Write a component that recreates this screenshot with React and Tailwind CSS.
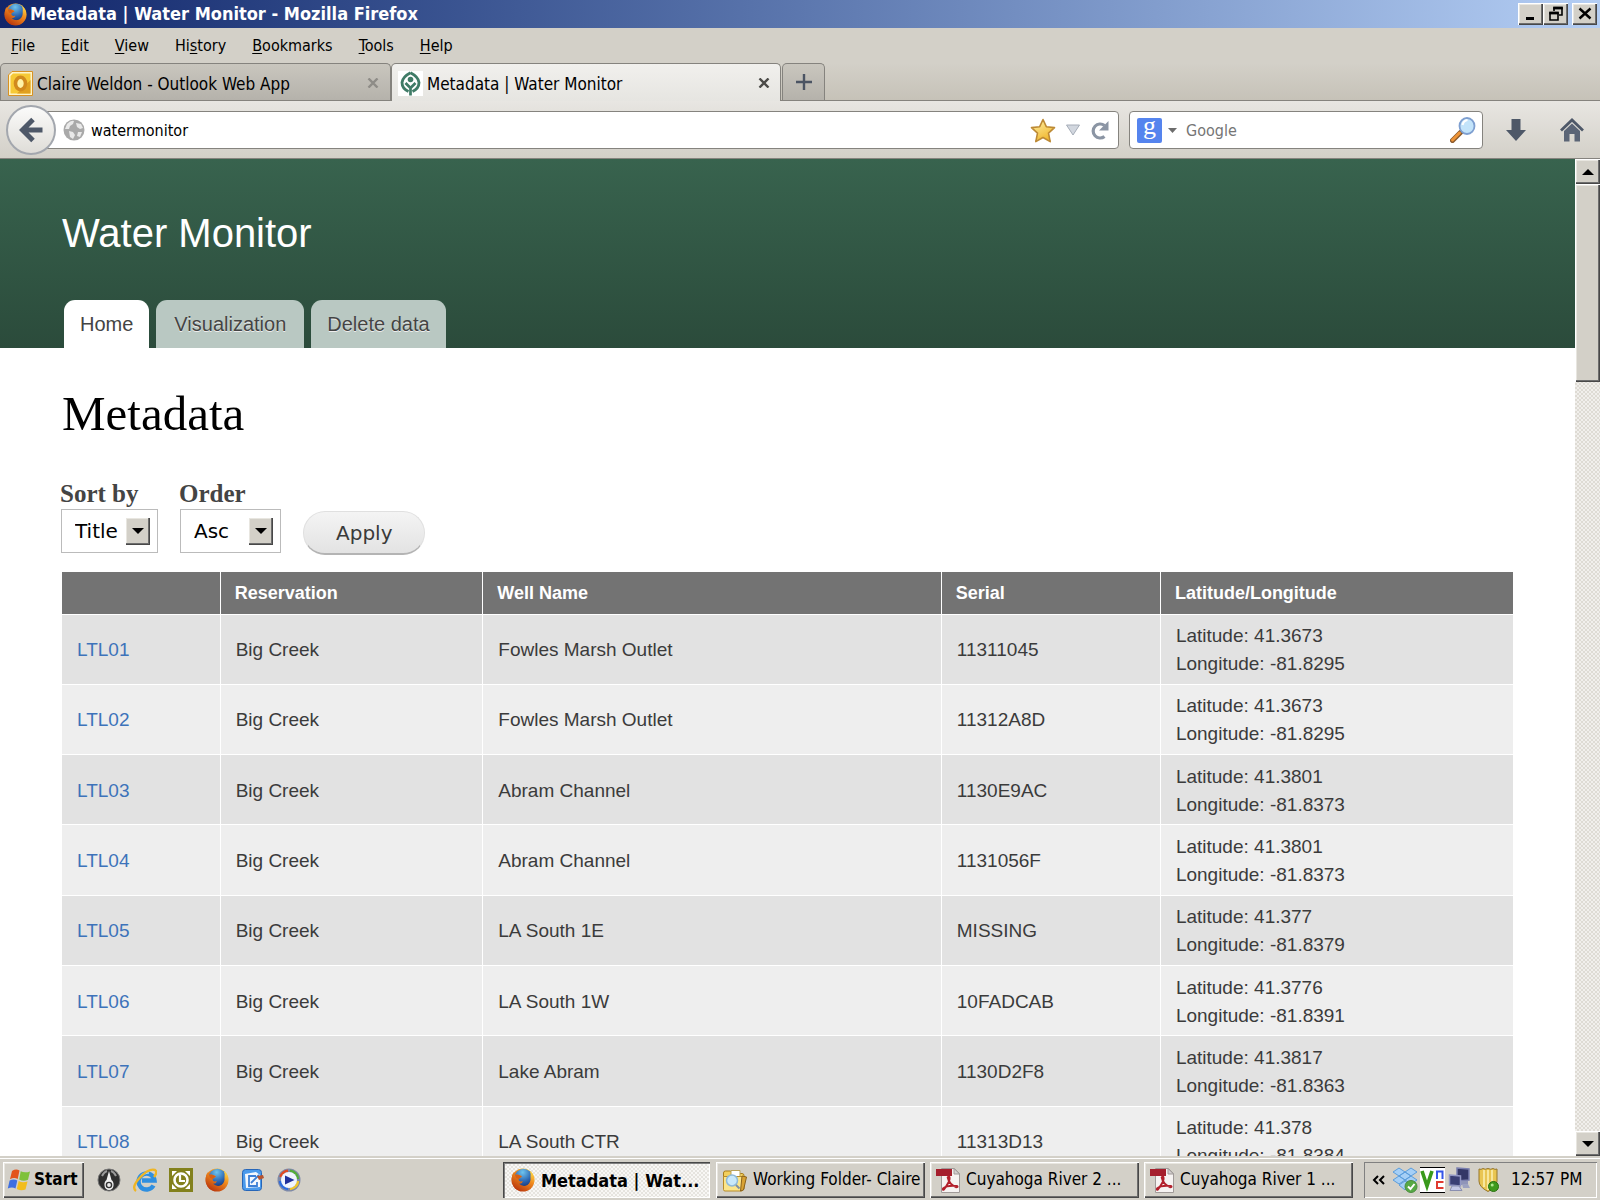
import React from "react";

const rows = [
  ["LTL01", "Fowles Marsh Outlet", "11311045", "41.3673", "-81.8295"],
  ["LTL02", "Fowles Marsh Outlet", "11312A8D", "41.3673", "-81.8295"],
  ["LTL03", "Abram Channel", "1130E9AC", "41.3801", "-81.8373"],
  ["LTL04", "Abram Channel", "1131056F", "41.3801", "-81.8373"],
  ["LTL05", "LA South 1E", "MISSING", "41.377", "-81.8379"],
  ["LTL06", "LA South 1W", "10FADCAB", "41.3776", "-81.8391"],
  ["LTL07", "Lake Abram", "1130D2F8", "41.3817", "-81.8363"],
  ["LTL08", "LA South CTR", "11313D13", "41.378", "-81.8384"],
];

const raised =
  "bg-[#d3d0c8] shadow-[inset_1px_1px_0_#fff,inset_-1px_-1px_0_#484848,inset_-2px_-2px_0_#6e6e6e,inset_2px_2px_0_#e8e6e0]";

function Firefox({ className }) {
  return (
    <svg viewBox="0 0 24 24" className={className} aria-hidden="true">
      <defs>
        <linearGradient id="ffBody" x1="0.9" y1="0" x2="0.2" y2="1">
          <stop offset="0" stopColor="#ffe04a" />
          <stop offset="0.4" stopColor="#f08a1d" />
          <stop offset="1" stopColor="#b5300c" />
        </linearGradient>
        <radialGradient id="ffGlobe" cx="0.45" cy="0.2" r="0.9">
          <stop offset="0" stopColor="#6fc4ee" />
          <stop offset="0.6" stopColor="#2a64b0" />
          <stop offset="1" stopColor="#17306e" />
        </radialGradient>
      </defs>
      <circle cx="12" cy="12" r="11.5" fill="url(#ffBody)" />
      <circle cx="12.5" cy="9.5" r="8.7" fill="url(#ffGlobe)" />
      <path d="M19 3q5 5 4 11q-2 8-10 9Q4 23.500 1 15Q0 9 2.500 4q0 2 1.500 3q2-1 4 0q2 0 3 1.500q-2 1-3.500 2.500q0 2 2 2.500l2.500-.2q-1 2.700-4 2.500q4 3.500 8.500 1.200Q20 14 19.500 9.500Q20 6 19 3Z" fill="url(#ffBody)" />
      <path d="M4 7q2-1 4 0l3 1.500q-2 1-3.500 2.500L5 10Z" fill="#d75f14" />
    </svg>
  );
}

function OutlookIcon() {
  return (
    <svg viewBox="0 0 25 25" className="size-[25px] shrink-0" aria-hidden="true">
      <path d="M4 .5h20.500v24H.5V4Z" fill="#fff4c8" stroke="#d89222" />
      <path d="M5 2.500h17.500v20H2.500V5Z" fill="#f6c936" />
      <path d="M22.500 9v13.500H9Z" fill="#e0a020" />
      <ellipse cx="12.500" cy="12.500" rx="5" ry="6.200" fill="#fff3a8" stroke="#d18a1d" strokeWidth="3.600" />
    </svg>
  );
}

function LeafIcon() {
  return (
    <svg viewBox="0 0 25 25" className="size-[25px] shrink-0 bg-white" aria-hidden="true">
      <path d="M12.500 1.800Q20.500 6 21 11.500Q21 17.500 14.500 20.500M12.500 1.800Q4.500 6 4 11.500Q4 17.500 10.500 20.500" fill="none" stroke="#3f7b66" strokeWidth="2.800" />
      <circle cx="12.500" cy="8.500" r="2.800" fill="#3f7b66" />
      <path d="M12.500 24.500V15M12.500 17L7.500 12M12.500 17l5-5" fill="none" stroke="#3f7b66" strokeWidth="2.700" />
    </svg>
  );
}

function Cross({ color }) {
  return (
    <svg viewBox="0 0 12 10" className="h-[10px] w-[12px]" aria-hidden="true">
      <path d="M1.500 0.500l9 9M10.500 0.500l-9 9" stroke={color} strokeWidth="2.400" />
    </svg>
  );
}

function PdfIcon() {
  return (
    <svg viewBox="0 0 25 26" className="h-[26px] w-[25px] shrink-0" aria-hidden="true">
      <path d="M5.500 1.500h13l5 5v19h-18Z" fill="#f6f3f2" stroke="#a09a98" />
      <path d="M18 1.500v5.500h5.500Z" fill="#d4d0d0" stroke="#a09a98" />
      <rect x="0" y="2" width="16" height="7" fill="#a51f2d" />
      <path d="M12.500 9.500q1.500 0 1 3t-5.500 10q-1.500 1-1-1q4-3.500 14-2.500q1.500 1-1 1.200Q13 17 11.700 10.500Z" fill="none" stroke="#b3202c" strokeWidth="1.900" />
    </svg>
  );
}

function FolderIcon() {
  return (
    <svg viewBox="0 0 26 25" className="h-[25px] w-[26px] shrink-0" aria-hidden="true">
      <path d="M1.500 5q0-2 2-2h5l2.500 2.500h9q2 0 2 2V21h-20.500Z" fill="#f2cf5c" stroke="#a87c1a" />
      <path d="M9 2.500h9v8H9Z" fill="#fff" stroke="#b9a25a" />
      <path d="M1.500 8.500h19V22q0 1-1.500 1H3q-1.500 0-1.500-1.500Z" fill="#fbe58b" stroke="#b88c28" />
      <path d="M20 8l4.500 1-3 13-3 1Z" fill="#d9a233" stroke="#8a621a" />
      <circle cx="10" cy="12.500" r="5.500" fill="#c8e8fa" stroke="#8fb9d8" strokeWidth="1.500" />
      <path d="M14 17l3.500 3.500" stroke="#7f8fa0" strokeWidth="2" />
    </svg>
  );
}

function WindowsFlag() {
  return (
    <svg viewBox="0 0 24 22" className="h-[22px] w-[24px] shrink-0" aria-hidden="true">
      <path d="M5 2q4-2.500 7.500-.5L10.700 10Q7 8 3 10.200Z" fill="#e3541c" />
      <path d="M13.700 2.300q4 2 9.300.2l-2 8.300q-4.500 2-8.800-.3Z" fill="#7fc13a" />
      <path d="M2.600 11.500q4-2 7.700 0L8.500 19.500Q5 17.500.8 19.500Z" fill="#3e6fe0" />
      <path d="M11.700 12q4 2.200 8.800.4l-2 8q-4.500 1.800-8.700-.5Z" fill="#f2bd1d" />
    </svg>
  );
}

function TriUp() {
  return (
    <svg viewBox="0 0 12 6" className="h-[6px] w-[12px]" aria-hidden="true">
      <path d="M6 0l6 6H0Z" fill="#000" />
    </svg>
  );
}

function TriDown() {
  return (
    <svg viewBox="0 0 12 6" className="h-[6px] w-[12px]" aria-hidden="true">
      <path d="M0 0h12L6 6Z" fill="#000" />
    </svg>
  );
}

function TitleBar() {
  return (
    <header className="flex h-7 shrink-0 items-center bg-linear-to-r from-[#12256a] to-[#b4cef4] pr-[3px] pl-1">
      <Firefox className="size-[23px]" />
      <h1 className="ml-[3px] flex-1 text-[18px] leading-7 font-bold text-white">
        Metadata | Water Monitor - Mozilla Firefox
      </h1>
      <button aria-label="Minimize" className={`grid h-[22px] w-[25px] place-items-center ${raised}`}>
        <svg viewBox="0 0 16 16" className="size-4" aria-hidden="true">
          <path d="M3 12.500h8" stroke="#000" strokeWidth="3" />
        </svg>
      </button>
      <button aria-label="Restore" className={`grid h-[22px] w-[25px] place-items-center ${raised}`}>
        <svg viewBox="0 0 16 16" className="size-4" aria-hidden="true">
          <path d="M6 5V2h8v7h-3" fill="none" stroke="#000" strokeWidth="1.600" />
          <path d="M5.200 2h9.600" stroke="#000" strokeWidth="2.800" />
          <path d="M2 7h8v7H2Z" fill="none" stroke="#000" strokeWidth="1.600" />
          <path d="M1.200 7h9.600" stroke="#000" strokeWidth="2.800" />
        </svg>
      </button>
      <button aria-label="Close" className={`ml-1 grid h-[22px] w-[25px] place-items-center ${raised}`}>
        <svg viewBox="0 0 16 16" className="size-4" aria-hidden="true">
          <path d="M2.500 2.500l11 10M13.500 2.500l-11 10" stroke="#000" strokeWidth="2.400" />
        </svg>
      </button>
    </header>
  );
}

const menus = [
  ["", "F", "ile"],
  ["", "E", "dit"],
  ["", "V", "iew"],
  ["Hi", "s", "tory"],
  ["", "B", "ookmarks"],
  ["", "T", "ools"],
  ["", "H", "elp"],
];

function MenuBar() {
  return (
    <nav aria-label="Menu" className="flex h-[35px] shrink-0 items-center gap-[26px] bg-[#d3d0c8] pl-[11px]">
      {menus.map(([a, b, c]) => (
        <button key={b + c} className="text-[16px] leading-6">
          {a}
          <span className="underline underline-offset-2">{b}</span>
          {c}
        </button>
      ))}
    </nav>
  );
}

function TabStrip() {
  return (
    <div className="flex h-[38px] shrink-0 border-b border-[#85837e] bg-linear-to-b from-[#d3d0c8] to-[#c6c2b8]">
      <div className="flex w-[391px] items-center rounded-t-[5px] border border-b-0 border-[#85837e] bg-linear-to-b from-[#c9c6be] to-[#b5b2ab] pt-[2px] pr-[11px] pl-[7px]">
        <OutlookIcon />
        <button className="ml-1 flex-1 truncate pt-[2px] text-left text-[17px] leading-6">Claire Weldon - Outlook Web App</button>
        <button aria-label="Close Claire Weldon tab"><Cross color="#8e8c87" /></button>
      </div>
      <div className="-mb-px flex w-[390px] items-center rounded-t-[5px] border border-b-0 border-[#85837e] bg-linear-to-b from-[#f1f0ed] to-[#e6e5e1] pt-px pr-[10px] pl-[6px]">
        <LeafIcon />
        <button className="ml-1 flex-1 truncate pt-[2px] text-left text-[17px] leading-6">Metadata | Water Monitor</button>
        <button aria-label="Close Metadata tab"><Cross color="#4c4b48" /></button>
      </div>
      <button aria-label="New tab" className="ml-px grid w-[43px] place-items-center rounded-t-[5px] border border-b-0 border-[#85837e] bg-linear-to-b from-[#c9c6be] to-[#b5b2ab]">
        <svg viewBox="0 0 16 16" className="size-4" aria-hidden="true">
          <path d="M8 0v16M0 8h16" stroke="#4b5463" strokeWidth="2.400" />
        </svg>
      </button>
    </div>
  );
}

function NavBar() {
  return (
    <div className="flex h-[58px] shrink-0 items-center border-b border-[#85837e] bg-linear-to-b from-[#e8e6e2] to-[#d3d0c8] pt-px pr-4 pl-[6px]">
      <button aria-label="Back" className="relative z-10 grid size-[50px] shrink-0 place-items-center rounded-full border-2 border-[#a3a7ae] bg-linear-to-b from-[#fbfbfa] to-[#dfddd8]">
        <svg viewBox="0 0 24 26" className="h-[26px] w-6" aria-hidden="true">
          <path d="M14 2.500L3.500 13L14 23.500M4 13h19.500" fill="none" stroke="#4e5868" strokeWidth="5" />
        </svg>
      </button>
      <div className="-ml-4 flex h-[38px] flex-1 items-center rounded-r-[4px] border border-[#85837e] bg-white pr-[9px] pl-[22px]">
        <svg viewBox="0 0 22 22" className="size-[22px] shrink-0" aria-hidden="true">
          <circle cx="11" cy="11" r="10.500" fill="#a9a9a9" />
          <path d="M4 5q4-4 7-3l-1 3-3 2-1 3-4 0ZM13 4l5 1 2 4-3 1-3-2ZM6 12l4 1 2 3-2 4-3-2ZM15 13l4 0-2 5-3-1Z" fill="#e9e9e9" />
        </svg>
        <input aria-label="Address" defaultValue="watermonitor" className="ml-[6px] min-w-0 flex-1 bg-transparent pt-[2px] text-[16px] leading-6 outline-none" />
        <button aria-label="Bookmark">
          <svg viewBox="0 0 26 25" className="h-[25px] w-[26px]" aria-hidden="true">
            <defs>
              <linearGradient id="star" x1="0" y1="0" x2="0.5" y2="1">
                <stop offset="0" stopColor="#fff2ac" />
                <stop offset="1" stopColor="#f0b830" />
              </linearGradient>
            </defs>
            <path d="M13 1.500l3.300 7.200 8.200.9-6 5.500 1.700 8.500L13 19.500l-7.200 4.100 1.700-8.500-6-5.500 8.200-.9Z" fill="url(#star)" stroke="#bd8a35" strokeWidth="1.600" strokeLinejoin="round" />
          </svg>
        </button>
        <button aria-label="History" className="ml-[9px]">
          <svg viewBox="0 0 16 12" className="h-3 w-4" aria-hidden="true">
            <path d="M1.500 1h13L8 11Z" fill="#d2d7df" stroke="#a6adb8" />
          </svg>
        </button>
        <button aria-label="Reload" className="ml-[9px]">
          <svg viewBox="0 0 19 20" className="h-5 w-[19px]" aria-hidden="true">
            <path d="M14.500 16.500A7 7 0 1 1 14.500 5.500" fill="none" stroke="#8b95a4" strokeWidth="3.200" />
            <path d="M18.500 1v9.500H9Z" fill="#8b95a4" />
          </svg>
        </button>
      </div>
      <div className="ml-[10px] flex h-[38px] w-[354px] items-center rounded-[4px] border border-[#85837e] bg-white pr-[6px] pl-[7px]">
        <div className="grid h-[25px] w-[25px] shrink-0 place-items-center rounded-[2px] bg-[#5584ee] font-['Liberation_Serif',serif] text-[26px] leading-[20px] text-white">
          <span className="-mt-2">g</span>
        </div>
        <button aria-label="Choose search engine" className="ml-[6px]">
          <svg viewBox="0 0 9 5" className="h-[5px] w-[9px]" aria-hidden="true">
            <path d="M0 0h9L4.500 5Z" fill="#6c6c6c" />
          </svg>
        </button>
        <input aria-label="Search" placeholder="Google" className="ml-[9px] min-w-0 flex-1 bg-transparent pt-[2px] text-[16px] leading-6 outline-none placeholder:text-[#757575]" />
        <button aria-label="Go">
          <svg viewBox="0 0 26 26" className="size-[26px]" aria-hidden="true">
            <path d="M2.500 23.500l8-8" stroke="#8a5a2c" strokeWidth="5" strokeLinecap="round" />
            <path d="M2.500 23l7-7" stroke="#ee9438" strokeWidth="3" strokeLinecap="round" />
            <ellipse cx="17" cy="9" rx="7.500" ry="8" fill="#c3e4fa" stroke="#7e9fd0" strokeWidth="1.800" />
            <path d="M12.500 8q1-4.500 5-5" fill="none" stroke="#fff" strokeWidth="2.200" />
          </svg>
        </button>
      </div>
      <button aria-label="Downloads" className="ml-[22px]">
        <svg viewBox="0 0 22 24" className="h-6 w-[22px]" aria-hidden="true">
          <path d="M6.500 1h9v11H21L11 23 1 12h5.500Z" fill="#4e5868" />
        </svg>
      </button>
      <button aria-label="Home" className="ml-[33px]">
        <svg viewBox="0 0 24 24" className="size-6" aria-hidden="true">
          <path d="M1 12.500L12 2l11 10.500" fill="none" stroke="#4e5868" strokeWidth="2.800" />
          <path d="M4 13l8-7.500L20 13v10.500h-5.500V16h-5v7.500H4Z" fill="#5b6576" />
        </svg>
      </button>
    </div>
  );
}

function SortSelect({ id, label, options, width }) {
  return (
    <div className="flex flex-col">
      <label htmlFor={id} className="-ml-px font-['Liberation_Serif',serif] text-[25px] leading-[30px] font-bold text-[#444]">
        {label}
      </label>
      <div className={`relative h-[44px] ${width}`}>
        <select id={id} className="size-full appearance-none rounded-none border border-[#bbb] bg-white pl-[13px] font-['DejaVu_Sans',sans-serif] text-[20px] text-black outline-none">
          {options.map((o) => (
            <option key={o}>{o}</option>
          ))}
        </select>
        <span className={`pointer-events-none absolute top-2 right-2 grid h-[28px] w-[25px] place-items-center ${raised}`}>
          <TriDown />
        </span>
      </div>
    </div>
  );
}

function WebPage() {
  return (
    <main className="min-w-0 flex-1 overflow-hidden bg-white font-['Liberation_Sans',sans-serif]">
      <div className="flex h-[189px] flex-col justify-between bg-linear-to-b from-[#38634e] to-[#2b4b3b] px-[62px]">
        <h2 className="mt-[50px] text-[40px] leading-[48px] text-white">Water Monitor</h2>
        <nav aria-label="Site" className="ml-[2px] flex gap-[7px] text-[20px] leading-[48px] text-[#444]">
          <a href="#home" className="rounded-t-[11px] bg-white px-4">Home</a>
          <a href="#visualization" className="rounded-t-[11px] bg-[#b9c8c2] px-[18px] text-shadow-[0_1px_0_#eee]">Visualization</a>
          <a href="#delete" className="rounded-t-[11px] bg-[#b9c8c2] px-4 text-shadow-[0_1px_0_#eee]">Delete data</a>
        </nav>
      </div>
      <div className="px-[62px]">
        <h2 className="pt-9 font-['Liberation_Serif',serif] text-[49px] leading-[60px] text-black">Metadata</h2>
        <form className="-ml-px mt-[35px] flex items-end">
          <SortSelect id="sort" label="Sort by" options={["Title"]} width="w-[97px]" />
          <div className="w-[22px]" />
          <SortSelect id="order" label="Order" options={["Asc", "Desc"]} width="w-[101px]" />
          <button type="button" className="-mb-[2px] ml-[22px] h-[44px] rounded-full border border-b-2 border-[#e0e0e0] border-b-[#b4b4b4] bg-linear-to-b from-[#f4f4f4] to-[#e3e3e3] px-8 font-['DejaVu_Sans',sans-serif] text-[20px] text-[#3a3a3a]">
            Apply
          </button>
        </form>
        <table className="mt-[19px] h-[605px] w-full table-fixed border-collapse text-left text-[19px] leading-7 text-[#3b3b3b]">
          <colgroup>
            <col className="w-[10.9%]" />
            <col className="w-[18.1%]" />
            <col className="w-[31.6%]" />
            <col className="w-[15.1%]" />
            <col />
          </colgroup>
          <thead>
            <tr className="h-[42px] border-b border-white bg-[#737373] text-[18px] text-white">
              {["", "Reservation", "Well Name", "Serial", "Latitude/Longitude"].map((h) => (
                <th key={h} scope="col" className="border-r border-white pl-[14px] font-bold last:border-r-0">{h}</th>
              ))}
            </tr>
          </thead>
          <tbody>
            {rows.map(([id, well, serial, lat, lng]) => (
              <tr key={id} className="h-[70px] border-b border-white odd:bg-[#e2e2e2] even:bg-[#eee]">
                <td className="border-r border-white pt-[2px] pl-[15px]">
                  <a href={"#" + id} className="text-[#3d73ba]">{id}</a>
                </td>
                <td className="border-r border-white pt-[2px] pl-[15px]">Big Creek</td>
                <td className="border-r border-white pt-[2px] pl-[15px]">{well}</td>
                <td className="border-r border-white pt-[2px] pl-[15px]">{serial}</td>
                <td className="pt-[2px] pl-[15px]">
                  Latitude: {lat}
                  <br />
                  Longitude: {lng}
                </td>
              </tr>
            ))}
          </tbody>
        </table>
      </div>
    </main>
  );
}

function ScrollBar() {
  return (
    <div className="flex w-[25px] shrink-0 flex-col bg-[#ebe9e5] bg-[repeating-conic-gradient(#f1efec_0_25%,#dedbd4_0_50%)] bg-size-[4px_4px]">
      <button aria-label="Scroll up" className={`grid h-[25px] place-items-center ${raised}`}><TriUp /></button>
      <div className={`h-[198px] ${raised}`} />
      <button aria-label="Scroll down" className={`mt-auto grid h-[25px] place-items-center ${raised}`}><TriDown /></button>
    </div>
  );
}

function QuickLaunch() {
  const c = "size-6";
  return (
    <div className="ml-[13px] flex items-center gap-3">
      <button aria-label="Pen tool">
        <svg viewBox="0 0 24 24" className={c} aria-hidden="true">
          <circle cx="12" cy="12" r="11" fill="#2e2e2e" stroke="#777" />
          <path d="M5 8q2-4 5-5M19 8q-2-4-5-5" stroke="#999" fill="none" strokeWidth="2" />
          <path d="M12 3l2.500 9q2.500 2 2 5.500a4.500 4.500 0 0 1-9 0q-.5-3.500 2-5.500Z" fill="#f0f0f0" />
          <circle cx="12" cy="17" r="2.600" fill="#eee" stroke="#333" strokeWidth="1.400" />
        </svg>
      </button>
      <button aria-label="Internet Explorer">
        <svg viewBox="0 0 24 24" className={c} aria-hidden="true">
          <path d="M20.500 17.500a8 8 0 1 1 1-5H9" fill="none" stroke="#2f8fe0" strokeWidth="4.400" />
          <path d="M8 8q3-3.500 8-3" fill="none" stroke="#a9dafa" strokeWidth="1.500" />
          <path d="M3 23Q-2 19 7 9.500T22 2q3 2-1 7" fill="none" stroke="#efb524" strokeWidth="2.400" />
        </svg>
      </button>
      <button aria-label="Clock">
        <svg viewBox="0 0 24 24" className={c} aria-hidden="true">
          <rect width="24" height="24" fill="#83811d" />
          <path d="M3 3h5L3 8ZM21 3h-5l5 5ZM3 21h5l-5-5ZM21 21h-5l5-5Z" fill="#fff" />
          <circle cx="12" cy="12" r="6.500" fill="#83811d" stroke="#fff" strokeWidth="2.600" />
          <path d="M11 7v6h5" stroke="#fff" strokeWidth="2.200" fill="none" />
        </svg>
      </button>
      <button aria-label="Firefox"><Firefox className={c} /></button>
      <button aria-label="Show desktop">
        <svg viewBox="0 0 24 24" className={c} aria-hidden="true">
          <rect x="1.500" y="1.500" width="19" height="21" rx="3" fill="#4a9aec" stroke="#2766b8" />
          <path d="M4 6l11-2 4 3v12l-14 1Z" fill="#f3f8fe" />
          <path d="M15 8H8v10h8v-4M10 15l8-8" stroke="#3c7fd6" strokeWidth="1.800" fill="none" />
          <path d="M16 8l6-1 1 3-5 2Z" fill="#b5532f" />
        </svg>
      </button>
      <button aria-label="Media player">
        <svg viewBox="0 0 24 24" className={c} aria-hidden="true">
          <circle cx="12" cy="12" r="11.500" fill="#7f8aa8" />
          <path d="M3.500 9A9 9 0 0 1 11 2.800" stroke="#e04a24" strokeWidth="2.600" fill="none" />
          <path d="M13 2.800A9 9 0 0 1 21 11" stroke="#54ad3a" strokeWidth="2.600" fill="none" />
          <path d="M21 13a9 9 0 0 1-8 8" stroke="#f1c62b" strokeWidth="2.600" fill="none" />
          <path d="M11 21a9 9 0 0 1-8-8" stroke="#2d6ce0" strokeWidth="2.600" fill="none" />
          <circle cx="12" cy="12" r="8" fill="#f1f5ff" />
          <path d="M8 7.500l9.500 4.500L8 16.500Z" fill="#22319c" />
        </svg>
      </button>
    </div>
  );
}

function Task({ icon, children }) {
  return (
    <button className={`flex h-9 w-[209px] shrink-0 items-center gap-[5px] pl-[6px] text-[17px] whitespace-nowrap ${raised}`}>
      {icon}
      {children}
    </button>
  );
}

function Tray() {
  return (
    <div className="flex h-9 w-[233px] shrink-0 items-center pl-2 shadow-[inset_1px_1px_0_#808080,inset_-1px_-1px_0_#fff]">
      <button aria-label="Show hidden icons">
        <svg viewBox="0 0 13 10" className="h-[10px] w-[13px]" aria-hidden="true">
          <path d="M6 1L2 5l4 4M12 1L8 5l4 4" stroke="#000" strokeWidth="2" fill="none" />
        </svg>
      </button>
      <svg viewBox="0 0 26 26" className="ml-[7px] size-[26px]" aria-hidden="true">
        <path d="M7 1l6 4-6 4-6-4ZM19 1l6 4-6 4-6-4ZM7 9l6 4-6 4-6-4ZM19 9l6 4-6 4-6-4ZM13 14l6 4-6 5-6-5ZM13 5l6 4-6 4-6-4Z" fill="#a5cff6" stroke="#5a9ddc" />
        <circle cx="19" cy="19.500" r="6" fill="#57a945" stroke="#4a8c3c" />
        <path d="M16 19.500l2.500 2.500 4-5" stroke="#fff" strokeWidth="2" fill="none" />
      </svg>
      <svg viewBox="0 0 25 26" className="ml-[2px] h-[26px] w-[25px]" aria-hidden="true">
        <rect width="25" height="26" fill="#fff" />
        <path d="M0 .5h25M0 25.500h25" stroke="#000" />
        <path d="M2 4l5 15 5-15" fill="none" stroke="#3a9a1c" strokeWidth="3.600" />
        <path d="M17 12V4.500h5.500V12" fill="none" stroke="#3455e8" strokeWidth="2" />
        <path d="M23.500 15H17v6h6.500" fill="none" stroke="#e03a30" strokeWidth="2" />
      </svg>
      <svg viewBox="0 0 24 26" className="ml-[3px] h-[26px] w-6" aria-hidden="true">
        <path d="M9 1l12 1v11l-12 1Z" fill="#333766" stroke="#7a7fae" strokeWidth="1.500" />
        <path d="M13 14h7v4h-7Z" fill="#8f94b8" />
        <path d="M1.500 8l11 1v10l-11-1Z" fill="#3a3f74" stroke="#9297c4" strokeWidth="1.500" />
        <path d="M4 19h7l3 4.500H2Z" fill="#c4c8e6" stroke="#8a8fb0" />
        <path d="M14 17h6l2 4h-7Z" fill="#9ca1c0" />
      </svg>
      <svg viewBox="0 0 24 26" className="ml-[5px] h-[26px] w-6" aria-hidden="true">
        <path d="M2 2q2 1 4-.5Q8 3 11 1.500 14 3 16 1.500 18 3 20 2v12q0 6-9 10.500Q2 20 2 14Z" fill="#e9c552" stroke="#96762a" />
        <path d="M7 3v17M11 3v20M15 3v17" stroke="#fbeeb0" strokeWidth="1.600" />
        <circle cx="16.500" cy="19.500" r="5" fill="#3f9a1d" stroke="#28700f" />
        <circle cx="15.200" cy="18" r="1.500" fill="#b0e890" />
      </svg>
      <time className="ml-[10px] text-[17px] whitespace-nowrap">12:57 PM</time>
    </div>
  );
}

function TaskBar() {
  return (
    <footer className="flex h-11 shrink-0 items-center border-t-2 border-[#d3d0c8] bg-[#d3d0c8] px-[3px] pt-[2px] shadow-[inset_0_1px_0_#fff]">
      <button className={`flex h-9 w-[81px] shrink-0 items-center gap-[3px] pl-1 text-[17px] font-bold ${raised}`}>
        <WindowsFlag />
        Start
      </button>
      <QuickLaunch />
      <div className="ml-auto flex gap-[5px]">
        <button className="mr-px flex h-9 w-[207px] items-center gap-[6px] bg-[#efedea] bg-[repeating-conic-gradient(#f8f7f5_0_25%,#e6e4df_0_50%)] bg-size-[4px_4px] pl-[8px] text-[18px] font-bold whitespace-nowrap shadow-[inset_1px_1px_0_#484848,inset_2px_2px_0_#808080,inset_-1px_-1px_0_#fff]">
          <Firefox className="size-6 shrink-0" />
          Metadata | Wat...
        </button>
        <Task icon={<FolderIcon />}>Working Folder- Claire</Task>
        <Task icon={<PdfIcon />}>Cuyahoga River 2 ...</Task>
        <Task icon={<PdfIcon />}>Cuyahoga River 1 ...</Task>
      </div>
      <div className="w-[11px] shrink-0" />
      <Tray />
    </footer>
  );
}

export default function App() {
  return (
    <div className="flex h-screen flex-col overflow-hidden bg-[#d3d0c8] font-['DejaVu_Sans_Condensed','DejaVu_Sans',sans-serif] text-black">
      <TitleBar />
      <MenuBar />
      <TabStrip />
      <NavBar />
      <div className="flex min-h-0 flex-1">
        <WebPage />
        <ScrollBar />
      </div>
      <TaskBar />
    </div>
  );
}
